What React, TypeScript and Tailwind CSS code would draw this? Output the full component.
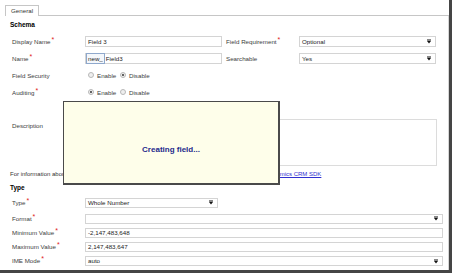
import React from "react";

function Req() {
  return <span className="ml-[1px] relative -top-[2px] text-[7px] leading-none text-[#e0201c]">*</span>;
}

function Label({ text, req, w = "w-[73px]" }: { text: string; req?: boolean; w?: string }) {
  return (
    <div className={`${w} shrink-0 text-[6.2px] text-[#3c3c3c] whitespace-nowrap`}>
      {text}
      {req && <Req />}
    </div>
  );
}

function Arrow() {
  return (
    <svg width="4" height="5" viewBox="0 0 4 5" className="shrink-0">
      <rect x="0" y="0.5" width="4" height="1" fill="#111" />
      <path d="M0 2 L4 2 L2 4.6 Z" fill="#111" />
    </svg>
  );
}

function Box({
  value,
  w,
  h = "h-[11px]",
  select,
  children,
}: {
  value?: string;
  w: string;
  h?: string;
  select?: boolean;
  children?: React.ReactNode;
}) {
  return (
    <div
      className={`${w} ${h} shrink-0 border border-[#d4d4d4] bg-white flex items-center pl-[2px] pr-[4px] text-[6.2px] text-[#222] whitespace-nowrap`}
    >
      <div className="flex-1 flex items-center">{children ?? value}</div>
      {select && <Arrow />}
    </div>
  );
}

function Radio({ on }: { on?: boolean }) {
  return (
    <span className="w-[6px] h-[6px] rounded-full border border-[#b8b8b8] bg-[#efefef] flex items-center justify-center shrink-0">
      {on && <span className="w-[2px] h-[2px] rounded-full bg-[#333]" />}
    </span>
  );
}

function Radios({ enable }: { enable: boolean }) {
  return (
    <div className="flex items-center pl-[3px] text-[6.2px] text-[#3c3c3c]">
      <Radio on={enable} />
      <span className="ml-[3px] w-[23px]">Enable</span>
      <Radio on={!enable} />
      <span className="ml-[3px]">Disable</span>
    </div>
  );
}

export default function App() {
  return (
    <div className="relative w-[452px] h-[273px] bg-white border-r-[3px] border-b-[3px] border-[#454545] font-['Liberation_Sans',Arial,sans-serif] overflow-hidden">
      {/* tab strip */}
      <div className="flex h-[16px] items-end">
        <div className="w-[5px]" />
        <div className="h-[11px] px-[5px] border border-b-0 border-[#c6c6c6] text-[6.2px] text-[#333] flex items-center">
          General
        </div>
        <div className="flex-1 border-b border-[#c6c6c6]" />
      </div>

      <div className="flex flex-col h-[254px] border-r border-[#d6d6d6]">
        <div className="h-[17px] pl-[10px] flex items-center text-[6.5px] font-bold text-black">Schema</div>

        <div className="h-[17px] pl-[12px] flex items-center">
          <Label text="Display Name" req />
          <Box w="w-[137px]" value="Field 3" />
          <div className="w-[4px]" />
          <Label text="Field Requirement" req />
          <Box w="w-[137px]" value="Optional" select />
        </div>

        <div className="h-[17px] pl-[12px] flex items-center">
          <Label text="Name" req />
          <Box w="w-[137px]">
            <span className="-ml-[2px] h-[11px] px-[1px] border border-[#8fa8cc] bg-[#f4f7fb] flex items-center">new_</span>
            <span className="ml-[1px]">Field3</span>
          </Box>
          <div className="w-[4px]" />
          <Label text="Searchable" />
          <Box w="w-[137px]" value="Yes" select />
        </div>

        <div className="h-[17px] pl-[12px] flex items-center">
          <Label text="Field Security" />
          <Radios enable={false} />
        </div>

        <div className="h-[17px] pl-[12px] flex items-center">
          <Label text="Auditing" req />
          <Radios enable />
        </div>

        <div className="mt-[18px] pl-[12px] flex items-start">
          <div className="pt-[2px]">
            <Label text="Description" />
          </div>
          <div className="w-[352px] h-[47px] border border-[#dcdcdc] bg-white" />
        </div>

        <div className="h-[16px] pl-[10px] flex items-center text-[6px] text-[#333] whitespace-nowrap">
          For information about how to interact with entities and fields programmatically, see the&nbsp;
          <span className="text-[#2f2fd0] underline">Microsoft Dynamics CRM SDK</span>
        </div>

        <div className="h-[12px] pl-[10px] flex items-center text-[6.5px] font-bold text-black">Type</div>

        <div className="h-[17px] pl-[12px] flex items-center">
          <Label text="Type" req />
          <Box w="w-[133px]" h="h-[10px]" value="Whole Number" select />
        </div>
        <div className="h-[15px] pl-[12px] flex items-center">
          <Label text="Format" req />
          <Box w="w-[358px]" h="h-[10px]" select />
        </div>
        <div className="h-[14px] pl-[12px] flex items-center">
          <Label text="Minimum Value" req />
          <Box w="w-[358px]" h="h-[10px]" value="-2,147,483,648" />
        </div>
        <div className="h-[14px] pl-[12px] flex items-center">
          <Label text="Maximum Value" req />
          <Box w="w-[358px]" h="h-[10px]" value="2,147,483,647" />
        </div>
        <div className="h-[14px] pl-[12px] flex items-center">
          <Label text="IME Mode" req />
          <Box w="w-[358px]" h="h-[10px]" value="auto" select />
        </div>
      </div>

      {/* progress overlay */}
      <div className="absolute left-[63px] top-[101px] w-[217px] h-[84px] bg-[#fefeea] border border-[#4a4a4a] border-r-2 border-b-2 pt-[33px] text-center">
        <span className="text-[8px] font-bold text-[#1e2a8c]">Creating field...</span>
      </div>
    </div>
  );
}
